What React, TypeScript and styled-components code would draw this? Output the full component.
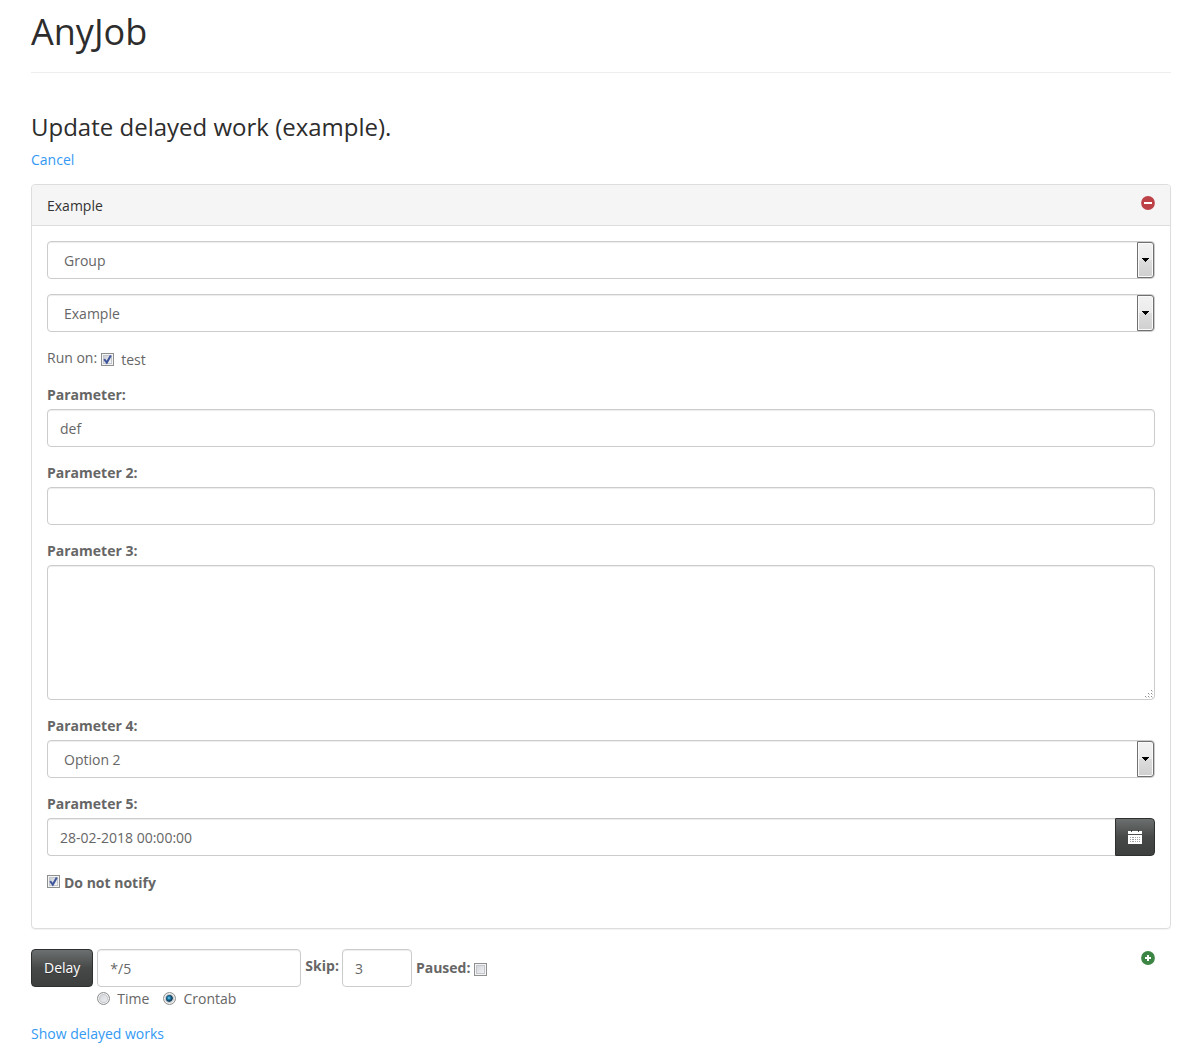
import React, { useState } from "react";
import styled, { createGlobalStyle, css } from "styled-components";

const svg = (w: number, h: number, body: string) =>
  `url("data:image/svg+xml,${encodeURIComponent(
    `<svg xmlns='http://www.w3.org/2000/svg' width='${w}' height='${h}' viewBox='0 0 ${w} ${h}'>${body}</svg>`
  )}")`;

const tick = svg(13, 13, "<path d='M3.2 6.2 L5.8 9.6 L9.8 2.6' fill='none' stroke='#3f559c' stroke-width='2'/>");
const grip = svg(
  10,
  10,
  "<path d='M7 1h1v1h-1zM4 4h1v1h-1zM7 4h1v1h-1zM1 7h1v1h-1zM4 7h1v1h-1zM7 7h1v1h-1z' fill='#8a8a8a'/><path d='M8 2h1v1h-1zM5 5h1v1h-1zM8 5h1v1h-1zM2 8h1v1h-1zM5 8h1v1h-1zM8 8h1v1h-1z' fill='#d0d0d0'/>"
);

const GlobalStyle = createGlobalStyle`
  *, *::before, *::after { box-sizing: border-box; }
  body {
    margin: 0;
    background: #fff;
    color: #666;
    font: 14px/20px "Open Sans", "Noto Sans", sans-serif;
  }
  input, select, textarea, button { font: inherit; color: inherit; margin: 0; }
`;

const Page = styled.main`
  padding: 8px 33px 16px 31px;
`;

const PageHeader = styled.header`
  padding-bottom: 16px;
  border-bottom: 1px solid #eee;
  margin-bottom: 40px;
`;

const Title = styled.h1`
  margin: 0;
  color: #2d2d2d;
  font-size: 36px;
  line-height: 48px;
  font-weight: 400;
`;

const Subtitle = styled.h2`
  margin: 0 0 10px;
  color: #2d2d2d;
  font-size: 24px;
  line-height: 27px;
  font-weight: 400;
`;

const Link = styled.a`
  display: table;
  color: #3399f3;
  text-decoration: none;
`;

const Panel = styled.section`
  margin: 14px 0 20px;
  border: 1px solid #ddd;
  border-radius: 4px;
  box-shadow: 0 1px 1px rgba(0, 0, 0, 0.05);
`;

const PanelHeading = styled.div`
  display: flex;
  justify-content: space-between;
  padding: 11px 15px 9px;
  background: #f5f5f5;
  border-bottom: 1px solid #ddd;
  border-radius: 3px 3px 0 0;
  color: #333;
`;

const PanelBody = styled.div`
  display: flex;
  flex-direction: column;
  gap: 15px;
  padding: 15px 15px 34px;
`;

const IconButton = styled.button`
  display: block;
  height: 14px;
  padding: 0;
  border: 0;
  background: none;
`;

const Field = styled.div`
  display: flex;
  flex-direction: column;
  gap: 3px;
`;

const Label = styled.label`
  font-weight: 700;
  line-height: 22px;
`;

const control = css`
  display: block;
  width: 100%;
  height: 38px;
  padding: 8px 12px;
  border: 1px solid #ccc;
  border-radius: 4px;
  background: #fff;
  box-shadow: inset 0 1px 1px rgba(0, 0, 0, 0.075);
  outline: none;
`;

const TextInput = styled.input`
  ${control}
`;

const TextArea = styled.textarea`
  ${control}
  height: 135px;
  resize: vertical;

  &::-webkit-resizer {
    background: ${grip} no-repeat right bottom;
  }
`;

const SelectBox = styled.div`
  position: relative;
`;

const SelectControl = styled.select`
  ${control}
  appearance: none;
  padding: 9px 16px 7px;
`;

const SelectArrow = styled.span`
  position: absolute;
  top: 1px;
  right: 1px;
  bottom: 1px;
  width: 17px;
  display: flex;
  align-items: center;
  justify-content: center;
  border: 1px solid #707070;
  border-radius: 0 3px 3px 0;
  box-shadow: inset 0 0 0 1px #fafafa;
  background: linear-gradient(#f2f2f2 0%, #ebebeb 50%, #dddddd 50%, #cfcfcf 100%);
  pointer-events: none;
`;

const box = css`
  flex: none;
  appearance: none;
  width: 13px;
  height: 13px;
`;

const Checkbox = styled.input.attrs({ type: "checkbox" })`
  ${box}
  border: 1px solid #8e8f8f;
  box-shadow: inset 0 0 0 1px #f4f4f4, inset 0 0 0 2px #c3c7cd;
  background: linear-gradient(135deg, #cbcfd5, #f6f6f6);

  &:checked {
    border: 0;
    box-shadow: none;
    background: ${tick} center no-repeat,
      linear-gradient(135deg, #cbcfd5, #f6f6f6) center / 7px 7px no-repeat,
      linear-gradient(#c3c7cd, #c3c7cd) center / 9px 9px no-repeat,
      linear-gradient(#f4f4f4, #f4f4f4) center / 11px 11px no-repeat,
      #8e8f8f;
  }
`;

const Radio = styled.input.attrs({ type: "radio" })`
  ${box}
  border: 1px solid #8e8f8f;
  border-radius: 50%;
  box-shadow: inset 0 0 0 1px #f4f4f4, inset 0 0 0 2px #c4c8cc;
  background: linear-gradient(135deg, #cbcfd5, #f6f6f6);

  &:checked {
    background: radial-gradient(circle at 45% 45%, #7fd4f5 0, #1f7dab 18%, #0b2f4d 40%, #e0e5e9 52%);
  }
`;

const RunRow = styled.div`
  display: flex;
  align-items: flex-start;
  gap: 4px;
  height: 22px;
`;

const RunLabel = styled.span`
  line-height: 22px;
`;

const Option = styled.label<{ $gap: number; $bold?: boolean }>`
  display: flex;
  align-items: flex-start;
  gap: ${(p) => p.$gap}px;
  font-weight: ${(p) => (p.$bold ? 700 : 400)};

  > input {
    margin-top: 3px;
  }
`;

const RunOption = styled(Option)`
  padding-top: 3px;
`;

const NotifyOption = styled(Option)`
  line-height: 22px;
  padding-top: 1px;
`;

const PausedOption = styled(Option)`
  > input {
    margin-top: 5px;
  }
`;

const InputGroup = styled.div`
  display: flex;

  ${TextInput} {
    flex: 1;
    min-width: 0;
    border-right: 0;
    border-radius: 4px 0 0 4px;
  }
`;

const DarkButton = styled.button<{ $attached?: boolean }>`
  display: flex;
  align-items: center;
  justify-content: center;
  height: 38px;
  padding: 0 12px;
  border: 1px solid #2e2f2f;
  border-radius: ${(p) => (p.$attached ? "0 4px 4px 0" : "4px")};
  background: linear-gradient(#6d7070, #474949 50%, #3d3f3f 100%);
  color: #fff;
  text-shadow: 0 1px 0 rgba(0, 0, 0, 0.3);
`;

const Toolbar = styled.div`
  display: flex;
  align-items: flex-start;
  gap: 4px;
  margin-bottom: 15px;

  ${IconButton} {
    margin: 2px 16px 0 auto;
  }
`;

const Schedule = styled.div`
  display: flex;
  flex-direction: column;
  gap: 2px;
  width: 204px;
`;

const Radios = styled.div`
  display: flex;
  gap: 14px;
`;

const Inline = styled.div`
  display: flex;
  align-items: center;
  gap: 3px;
  min-height: 38px;
`;

const SkipLabel = styled(Label)`
  padding-bottom: 4px;
`;

const SkipInput = styled(TextInput)`
  width: 70px;
`;

const IconSvg = styled.svg`
  display: block;
`;

const RoundSign = ({ plus }: { plus?: boolean }) => (
  <IconSvg width="14" height="14" viewBox="0 0 14 14" aria-hidden="true">
    <circle cx="7" cy="7" r="6.9" fill={plus ? "#3c8544" : "#bd4247"} />
    <path d={plus ? "M6 4h2v2h2v2H8v2H6V8H4V6h2z" : "M3 6h8v2H3z"} fill="#fff" />
  </IconSvg>
);

const CalendarIcon = () => (
  <IconSvg width="14" height="16" viewBox="0 0 14 16" aria-hidden="true">
    <path d="M0 2h3v1h1V2h6v1h1V2h3v3H0z" fill="#fff" />
    <path d="M3 1h1v1H3zM10 1h1v1h-1z" fill="#2e2f2f" />
    <path d="M0 6h14v9H0z" fill="#fff" />
    <path
      d="M2 8h1v1H2zM4 8h2v1H4zM7 8h1v1H7zM9 8h1v1H9zM11 8h1v1h-1zM2 10h1v1H2zM4 10h2v1H4zM7 10h1v1H7zM9 10h1v1H9zM11 10h1v1h-1zM2 12h1v1H2zM4 12h2v1H4zM7 12h1v1H7zM9 12h1v1H9zM11 12h1v1h-1z"
      fill="#a2a2a6"
    />
  </IconSvg>
);

type SelectProps = { id?: string; label?: string; options: string[]; initial: string };

const Select = ({ id, label, options, initial }: SelectProps) => (
  <SelectBox>
    <SelectControl id={id} aria-label={label} defaultValue={initial}>
      {options.map((o) => (
        <option key={o}>{o}</option>
      ))}
    </SelectControl>
    <SelectArrow>
      <IconSvg width="7" height="4" viewBox="0 0 7 4" aria-hidden="true">
        <path d="M0 0h7v1H6v1H5v1H4v1H3V3H2V2H1V1H0z" fill="#000" />
      </IconSvg>
    </SelectArrow>
  </SelectBox>
);

export default function App() {
  const [mode, setMode] = useState("crontab");

  return (
    <>
      <GlobalStyle />
      <Page>
        <PageHeader>
          <Title>AnyJob</Title>
        </PageHeader>
        <Subtitle>Update delayed work (example).</Subtitle>
        <Link href="#cancel">Cancel</Link>

        <Panel>
          <PanelHeading>
            <span>Example</span>
            <IconButton type="button" aria-label="Remove work">
              <RoundSign />
            </IconButton>
          </PanelHeading>
          <PanelBody>
            <Select label="Group" options={["Group"]} initial="Group" />
            <Select label="Work" options={["Example"]} initial="Example" />
            <RunRow>
              <RunLabel>Run on:</RunLabel>
              <RunOption $gap={7}>
                <Checkbox defaultChecked />
                test
              </RunOption>
            </RunRow>
            <Field>
              <Label htmlFor="p1">Parameter:</Label>
              <TextInput id="p1" defaultValue="def" />
            </Field>
            <Field>
              <Label htmlFor="p2">Parameter 2:</Label>
              <TextInput id="p2" />
            </Field>
            <Field>
              <Label htmlFor="p3">Parameter 3:</Label>
              <TextArea id="p3" />
            </Field>
            <Field>
              <Label htmlFor="p4">Parameter 4:</Label>
              <Select id="p4" options={["Option 1", "Option 2"]} initial="Option 2" />
            </Field>
            <Field>
              <Label htmlFor="p5">Parameter 5:</Label>
              <InputGroup>
                <TextInput id="p5" defaultValue="28-02-2018 00:00:00" />
                <DarkButton type="button" $attached aria-label="Choose date">
                  <CalendarIcon />
                </DarkButton>
              </InputGroup>
            </Field>
            <NotifyOption $gap={4} $bold>
              <Checkbox defaultChecked />
              Do not notify
            </NotifyOption>
          </PanelBody>
        </Panel>

        <Toolbar>
          <DarkButton type="submit">Delay</DarkButton>
          <Schedule>
            <TextInput aria-label="Schedule" defaultValue="*/5" />
            <Radios>
              <Option $gap={7}>
                <Radio name="mode" checked={mode === "time"} onChange={() => setMode("time")} />
                Time
              </Option>
              <Option $gap={7}>
                <Radio name="mode" checked={mode === "crontab"} onChange={() => setMode("crontab")} />
                Crontab
              </Option>
            </Radios>
          </Schedule>
          <Inline>
            <SkipLabel htmlFor="skip">Skip:</SkipLabel>
            <SkipInput id="skip" defaultValue="3" />
          </Inline>
          <Inline>
            <PausedOption $gap={4} $bold>
              Paused:
              <Checkbox />
            </PausedOption>
          </Inline>
          <IconButton type="button" aria-label="Add work">
            <RoundSign plus />
          </IconButton>
        </Toolbar>
        <Link href="#works">Show delayed works</Link>
      </Page>
    </>
  );
}
